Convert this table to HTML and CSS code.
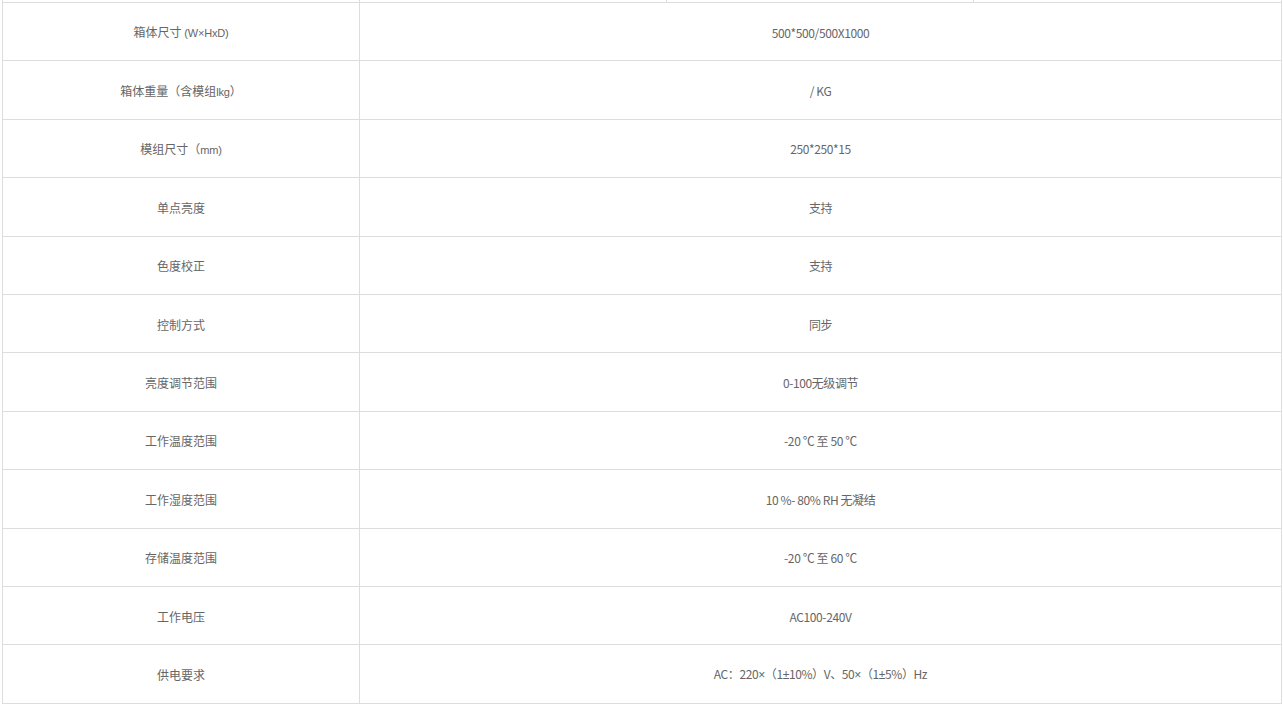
FILE: index.html
```html
<!DOCTYPE html>
<html lang="zh">
<head>
<meta charset="utf-8">
<title>参数</title>
<link rel="stylesheet" href="styles.css">
</head>
<body>
<div class="wrap">
  <div class="stub">
    <div class="stub-cell"></div>
    <div class="stub-cell"></div>
    <div class="stub-cell"></div>
    <div class="stub-cell"></div>
  </div>
  <table class="spec">
    <tbody>
      <tr><td class="k">箱体尺寸 <span class="lat">(W×HxD)</span></td><td class="v">500*500/500X1000</td></tr>
      <tr><td class="k">箱体重量（含模组<span class="lat">lkg</span>）</td><td class="v">/ KG</td></tr>
      <tr><td class="k">模组尺寸（<span class="lat">mm)</span></td><td class="v">250*250*15</td></tr>
      <tr><td class="k">单点亮度</td><td class="v">支持</td></tr>
      <tr><td class="k">色度校正</td><td class="v">支持</td></tr>
      <tr><td class="k">控制方式</td><td class="v">同步</td></tr>
      <tr><td class="k">亮度调节范围</td><td class="v">0-100无级调节</td></tr>
      <tr><td class="k">工作温度范围</td><td class="v">-20 ℃ 至 50 ℃</td></tr>
      <tr><td class="k">工作湿度范围</td><td class="v">10 %- 80% RH 无凝结</td></tr>
      <tr><td class="k">存储温度范围</td><td class="v">-20 ℃ 至 60 ℃</td></tr>
      <tr><td class="k">工作电压</td><td class="v">AC100-240V</td></tr>
      <tr><td class="k">供电要求</td><td class="v">AC：220<span class="sym">×</span>（1<span class="sym">±</span>10%）V、50<span class="sym">×</span>（1<span class="sym">±</span>5%）Hz</td></tr>
    </tbody>
  </table>
</div>
</body>
</html>
```
FILE: styles.css
```css
html, body {
  margin: 0;
  padding: 0;
  background: #fff;
}
.wrap {
  padding-left: 2px;
  width: 1280px;
}
.stub {
  display: grid;
  grid-template-columns: 357px 307px 307px 309px;
  height: 2px;
}
.stub-cell {
  border-left: 1px solid #dddddd;
}
.stub-cell:last-child {
  border-right: 1px solid #dddddd;
}
.spec {
  width: 1280px;
  border-collapse: collapse;
  table-layout: fixed;
  color: #666;
  font-size: 12px;
}
.spec td {
  border: 1px solid #dddddd;
  height: 55.4px;
  padding: 2px 0 0 0;
  text-align: center;
  vertical-align: middle;
  line-height: 18px;
}
.spec td.k {
  width: 356px;
  font-family: "Noto Sans CJK SC", sans-serif;
}
.spec td.v {
  font-family: "Noto Sans CJK SC", sans-serif;
  letter-spacing: -0.4px;
}
.lat {
  font-family: "Liberation Sans", sans-serif;
  font-size: 11px;
  letter-spacing: -0.2px;
}
.sym {
  font-family: "Liberation Sans", sans-serif;
  font-size: 12px;
}
```
